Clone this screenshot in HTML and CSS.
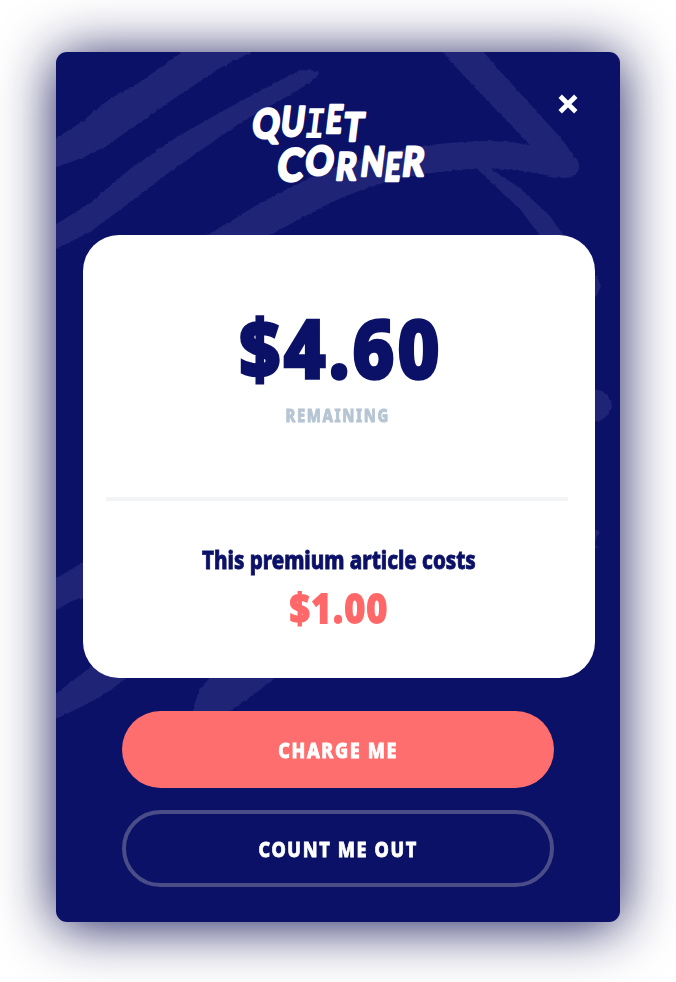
FILE: index.html
```html
<!DOCTYPE html>
<html lang="en">
<head>
<meta charset="utf-8">
<title>Quiet Corner</title>
<link rel="stylesheet" href="styles.css">
</head>
<body>
<main class="modal">
  <svg class="brush" viewBox="56 52 564 870" aria-hidden="true">
    <defs>
      <filter id="rough" x="-5%" y="-5%" width="110%" height="110%" color-interpolation-filters="sRGB">
        <feTurbulence type="fractalNoise" baseFrequency=".25" numOctaves="3" seed="4"/>
        <feDisplacementMap in="SourceGraphic" scale="3" xChannelSelector="R" yChannelSelector="G"/>
      </filter>
    </defs>
    <g filter="url(#rough)" fill="#1f2477">
      <path d="M50 142L80 123L108 100L140 82L185 50H256L220 68L175 98L145 119L105 147L82 158L50 169Z"/>
      <path d="M50 228L90 203L130 169L180 135L230 107L290 75Q305 65 320 73L311 82L290 95L240 123L190 158L170 172L120 210L90 232L50 252Z"/>
      <path d="M206 236L260 203L320 173C380 150 430 142 490 141Q515 142 530 145L475 88L455 66L441 50H482L500 71L560 137L576 158Q583 165 575 175Q570 180 550 176C510 168 490 166 440 172C400 177 370 185 330 203L268 236Z"/>
      <path d="M474 166L490 168L520 188L550 216L564 236H540L520 209L495 186Z"/>
      <path d="M590 274L597 276L601 286L597 295L590 300Z"/>
      <path d="M590 388L602 391Q612 396 612 406Q611 415 601 420L590 424Z"/>
      <path d="M594 529L600 532L597 537L595 544L598 548L592 549Z"/>
      <path d="M50 582L85 561V597L72 601L50 614Z"/>
      <path d="M50 698L92 666L132 674L105 694L85 705L50 722Z"/>
      <path d="M213 674L199 690L192 713H226L248 699L280 674Z"/>
    </g>
  </svg>
  <header class="top">
    <svg class="logo" viewBox="248 98 184 90" role="img" aria-label="Quiet Corner">
      <g class="logo-letters">
        <text transform="translate(251 138) skewX(-7) scale(.8 .96)">Q</text>
        <text transform="translate(279.500 136) skewX(-7) scale(.76 .97)">U</text>
        <text class="slab" transform="translate(303 137.500) skewX(-7) scale(.84 1)">I</text>
        <text transform="translate(324.500 132.500) skewX(-7) scale(.68 .92)">E</text>
        <text transform="translate(342 140.500) skewX(-7) scale(.8 .93)">T</text>
        <text transform="translate(276 180.500) skewX(-7) scale(.93 1.060)">C</text>
        <text transform="translate(304 175) skewX(-7) scale(.83 .95)">O</text>
        <text transform="translate(334.500 179.500) skewX(-7) scale(.76 .91)">R</text>
        <text transform="translate(359.500 175.500) skewX(-7) scale(.72 .96)">N</text>
        <text transform="translate(383.500 181) skewX(-7) scale(.66 .93)">E</text>
        <text transform="translate(401 175.500) skewX(-7) scale(.8 .96)">R</text>
      </g>
    </svg>
    <button class="close" aria-label="Close">
      <svg viewBox="0 0 20 20"><path d="M2.200 2.200L17.800 17.800M17.800 2.200L2.200 17.800"/></svg>
    </button>
  </header>
  <section class="panel">
    <div class="balance"><span>$4.60</span></div>
    <div class="label"><span>REMAINING</span></div>
    <hr>
    <p class="note"><span>This premium article costs</span></p>
    <div class="cost"><span>$1.00</span></div>
  </section>
  <div class="actions">
    <button class="btn primary"><span>CHARGE ME</span></button>
    <button class="btn outline"><span>COUNT ME OUT</span></button>
  </div>
</main>
</body>
</html>
```
FILE: styles.css
```css
* { box-sizing: border-box; }
body { margin: 0; padding: 52px 56px 60px; background: #fff; font-family: "Noto Sans", sans-serif; font-weight: 800; }
.modal { position: relative; width: 564px; height: 870px; border-radius: 11px; background: #0b1167; box-shadow: 0 4px 56px rgb(12 12 80 / .95); padding-left: 27px; }
.brush { position: absolute; inset: 0; width: 564px; height: 870px; border-radius: 11px; }
.top { position: relative; height: 182.5px; width: 511.5px; }
.logo { display: block; width: 184px; height: 90px; margin-left: 165px; transform: translateY(46px); overflow: visible; }
.logo-letters { font-family: Lato, sans-serif; font-weight: 900; font-size: 42px; fill: #fff; stroke: #fff; stroke-width: 2.5px; stroke-linejoin: round; }
.slab { font-family: "DejaVu Sans Mono", monospace; font-weight: 700; font-size: 41px; stroke-width: 0; }
.close { position: absolute; top: 42px; right: 17px; width: 20px; height: 20px; padding: 0; border: 0; background: none; }
.close svg { display: block; width: 20px; height: 20px; fill: none; stroke: #fff; stroke-width: 4.8; }
.panel { position: relative; width: 511.5px; height: 443px; border-radius: 36px; background: #fff; text-align: center; padding-top: 63px; color: #0b1167; }
.panel span, .btn span { display: inline-block; white-space: nowrap; -webkit-text-stroke: .8px currentColor; transform: scaleX(.82); }
.balance { height: 98px; font-size: 81px; line-height: 98px; }
.panel .balance span { transform: scaleX(.885); letter-spacing: 4px; margin-right: -4px; -webkit-text-stroke-width: 3.5px; }
.label { height: 32px; margin-top: 3px; font-size: 18px; line-height: 32px; letter-spacing: 2px; color: #b5c5d3; }
.label span { position: relative; left: -1px; }
hr { width: 462px; height: 4px; border: 0; margin: 66px 0 0 23px; background: #f3f4f6; }
.note { height: 34px; margin: 41.5px 0 0; font-size: 25px; line-height: 34px; }
.cost { height: 54px; margin-top: 4px; font-size: 41px; line-height: 54px; color: #ff6868; }
.panel .cost span { transform: scaleX(.87); letter-spacing: 1.5px; -webkit-text-stroke-width: 1.8px; }
.actions { position: relative; display: flex; flex-direction: column; gap: 21.500px; margin: 33px 0 0 39px; width: 432px; }
.btn { height: 77.500px; border: 0; border-radius: 39px; padding: 0; font: 800 22px/1 "Noto Sans", sans-serif; letter-spacing: 2px; color: #fff; }
.primary { background: #ff6e6e; }
.outline { background: none; border: 4px solid #4b4d88; }
```
